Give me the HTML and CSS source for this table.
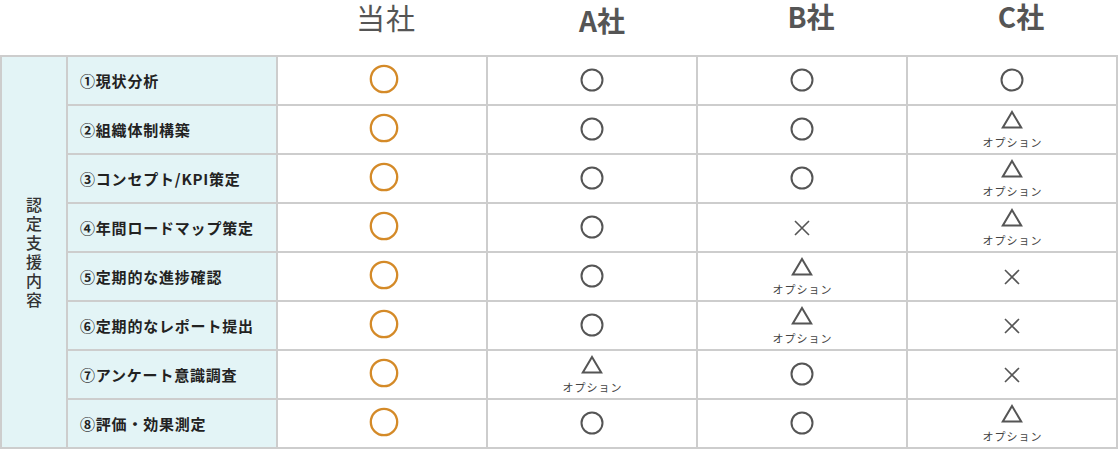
FILE: index.html
```html
<!DOCTYPE html>
<html lang="ja">
<head>
<meta charset="utf-8">
<link rel="stylesheet" href="styles.css">
</head>
<body>
<div class="page">
  <div class="head">
    <div class="hcell hspan"></div>
    <div class="hcell"><span class="title t-own">当社</span></div>
    <div class="hcell"><span class="title t-a">A社</span></div>
    <div class="hcell"><span class="title t-b">B社</span></div>
    <div class="hcell"><span class="title t-c">C社</span></div>
  </div>
  <div class="grid">
    <div class="cat"><span class="cat-text">認定支援内容</span></div>

    <div class="label">①現状分析</div>
    <div class="cell"><svg class="own" viewBox="0 0 30 30"><circle cx="15" cy="15" r="13.2"/></svg></div>
    <div class="cell"><svg class="ok" viewBox="0 0 24 24"><circle cx="12" cy="12" r="10.5"/></svg></div>
    <div class="cell"><svg class="ok" viewBox="0 0 24 24"><circle cx="12" cy="12" r="10.5"/></svg></div>
    <div class="cell"><svg class="ok" viewBox="0 0 24 24"><circle cx="12" cy="12" r="10.5"/></svg></div>

    <div class="label">②組織体制構築</div>
    <div class="cell"><svg class="own" viewBox="0 0 30 30"><circle cx="15" cy="15" r="13.2"/></svg></div>
    <div class="cell"><svg class="ok" viewBox="0 0 24 24"><circle cx="12" cy="12" r="10.5"/></svg></div>
    <div class="cell"><svg class="ok" viewBox="0 0 24 24"><circle cx="12" cy="12" r="10.5"/></svg></div>
    <div class="cell opt"><svg class="tri" viewBox="0 0 22 19"><path d="M11 2 L20.2 17.5 L1.8 17.5 Z"/></svg><span class="opt-text">オプション</span></div>

    <div class="label">③コンセプト/KPI策定</div>
    <div class="cell"><svg class="own" viewBox="0 0 30 30"><circle cx="15" cy="15" r="13.2"/></svg></div>
    <div class="cell"><svg class="ok" viewBox="0 0 24 24"><circle cx="12" cy="12" r="10.5"/></svg></div>
    <div class="cell"><svg class="ok" viewBox="0 0 24 24"><circle cx="12" cy="12" r="10.5"/></svg></div>
    <div class="cell opt"><svg class="tri" viewBox="0 0 22 19"><path d="M11 2 L20.2 17.5 L1.8 17.5 Z"/></svg><span class="opt-text">オプション</span></div>

    <div class="label">④年間ロードマップ策定</div>
    <div class="cell"><svg class="own" viewBox="0 0 30 30"><circle cx="15" cy="15" r="13.2"/></svg></div>
    <div class="cell"><svg class="ok" viewBox="0 0 24 24"><circle cx="12" cy="12" r="10.5"/></svg></div>
    <div class="cell"><svg class="ng" viewBox="0 0 18 18"><path d="M2 2 L16 16 M16 2 L2 16"/></svg></div>
    <div class="cell opt"><svg class="tri" viewBox="0 0 22 19"><path d="M11 2 L20.2 17.5 L1.8 17.5 Z"/></svg><span class="opt-text">オプション</span></div>

    <div class="label">⑤定期的な進捗確認</div>
    <div class="cell"><svg class="own" viewBox="0 0 30 30"><circle cx="15" cy="15" r="13.2"/></svg></div>
    <div class="cell"><svg class="ok" viewBox="0 0 24 24"><circle cx="12" cy="12" r="10.5"/></svg></div>
    <div class="cell opt"><svg class="tri" viewBox="0 0 22 19"><path d="M11 2 L20.2 17.5 L1.8 17.5 Z"/></svg><span class="opt-text">オプション</span></div>
    <div class="cell"><svg class="ng" viewBox="0 0 18 18"><path d="M2 2 L16 16 M16 2 L2 16"/></svg></div>

    <div class="label">⑥定期的なレポート提出</div>
    <div class="cell"><svg class="own" viewBox="0 0 30 30"><circle cx="15" cy="15" r="13.2"/></svg></div>
    <div class="cell"><svg class="ok" viewBox="0 0 24 24"><circle cx="12" cy="12" r="10.5"/></svg></div>
    <div class="cell opt"><svg class="tri" viewBox="0 0 22 19"><path d="M11 2 L20.2 17.5 L1.8 17.5 Z"/></svg><span class="opt-text">オプション</span></div>
    <div class="cell"><svg class="ng" viewBox="0 0 18 18"><path d="M2 2 L16 16 M16 2 L2 16"/></svg></div>

    <div class="label">⑦アンケート意識調査</div>
    <div class="cell"><svg class="own" viewBox="0 0 30 30"><circle cx="15" cy="15" r="13.2"/></svg></div>
    <div class="cell opt"><svg class="tri" viewBox="0 0 22 19"><path d="M11 2 L20.2 17.5 L1.8 17.5 Z"/></svg><span class="opt-text">オプション</span></div>
    <div class="cell"><svg class="ok" viewBox="0 0 24 24"><circle cx="12" cy="12" r="10.5"/></svg></div>
    <div class="cell"><svg class="ng" viewBox="0 0 18 18"><path d="M2 2 L16 16 M16 2 L2 16"/></svg></div>

    <div class="label">⑧評価・効果測定</div>
    <div class="cell"><svg class="own" viewBox="0 0 30 30"><circle cx="15" cy="15" r="13.2"/></svg></div>
    <div class="cell"><svg class="ok" viewBox="0 0 24 24"><circle cx="12" cy="12" r="10.5"/></svg></div>
    <div class="cell"><svg class="ok" viewBox="0 0 24 24"><circle cx="12" cy="12" r="10.5"/></svg></div>
    <div class="cell opt"><svg class="tri" viewBox="0 0 22 19"><path d="M11 2 L20.2 17.5 L1.8 17.5 Z"/></svg><span class="opt-text">オプション</span></div>
  </div>
</div>
</body>
</html>
```

FILE: styles.css
```css
* { box-sizing: border-box; }
html, body { margin: 0; padding: 0; background: #fff; }
body {
  font-family: "Noto Sans CJK JP", "Noto Sans", sans-serif;
  color: #333;
  width: 1118px;
  height: 450px;
  overflow: hidden;
}
.head {
  display: grid;
  grid-template-columns: 276px repeat(4, 208px);
  column-gap: 2px;
  padding: 0 2px 0 0;
  height: 55px;
}
.hcell {
  display: flex;
  justify-content: center;
  align-items: flex-start;
}
.title {
  color: #555;
  line-height: 1.2;
  display: block;
}
.t-own { font-size: 29px; font-weight: 400; margin-top: 0; margin-left: 8px; letter-spacing: 1px; }
.t-a { font-size: 28px; font-weight: 700; margin-top: 4px; margin-left: 20px; }
.t-b { font-size: 28px; font-weight: 700; margin-top: 0; margin-left: 18px; }
.t-c { font-size: 28px; font-weight: 700; margin-top: 0; margin-left: 18px; }

.grid {
  display: grid;
  grid-template-columns: 64px repeat(5, 208px);
  grid-template-rows: repeat(8, 47px);
  gap: 2px;
  padding: 2px;
  background: #cdcdcd;
  width: 1118px;
}
.cat {
  grid-row: 1 / span 8;
  background: #e3f4f6;
  display: flex;
  align-items: center;
  justify-content: center;
}
.cat-text {
  writing-mode: vertical-rl;
  font-size: 16px;
  letter-spacing: 3px;
  color: #333;
  font-weight: 500;
  margin-top: 4px;
}
.label {
  background: #e3f4f6;
  display: flex;
  align-items: center;
  padding-left: 12px;
  font-size: 15px;
  letter-spacing: 0.8px;
  font-weight: 700;
  color: #222;
  white-space: nowrap;
}
.cell {
  background: #fff;
  display: flex;
  align-items: center;
  justify-content: center;
}
.cell.opt {
  flex-direction: column;
  justify-content: flex-start;
  padding-top: 4px;
}
.own { width: 30px; height: 30px; margin-left: 4px; margin-top: -3px; }
.own circle { fill: none; stroke: #d48a28; stroke-width: 2.3; }
.ok { width: 24px; height: 24px; margin-top: -2px; }
.ok circle { fill: none; stroke: #555; stroke-width: 2; }
.tri { width: 22px; height: 19px; display: block; }
.tri path { fill: none; stroke: #555; stroke-width: 2; stroke-linejoin: miter; }
.ng { width: 18px; height: 18px; }
.ng path { fill: none; stroke: #555; stroke-width: 1.6; }
.opt-text {
  font-size: 11px;
  line-height: 1;
  letter-spacing: 1px;
  color: #444;
  margin-top: 8px;
  margin-left: 1px;
}
```
